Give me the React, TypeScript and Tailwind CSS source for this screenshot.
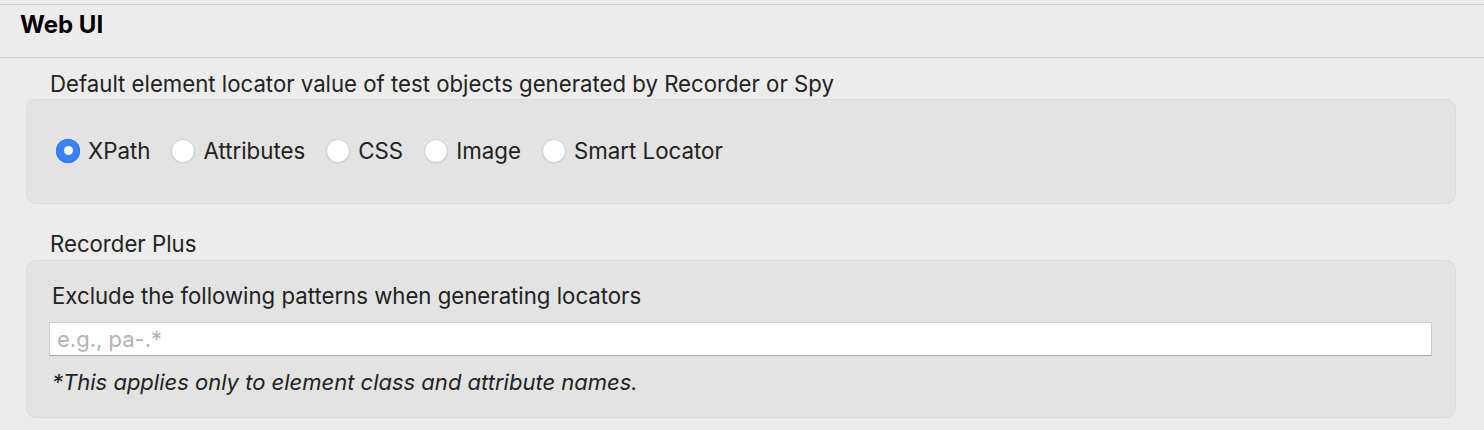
import React from 'react'

const font = { fontFamily: 'Inter, "Liberation Sans", sans-serif' }

const options = ['XPath', 'Attributes', 'CSS', 'Image', 'Smart Locator']

function Radio({ label, checked }: { label: string; checked?: boolean }) {
  return (
    <label className="flex items-center gap-[8px]">
      {checked ? (
        <span className="w-[24px] h-[24px] rounded-full bg-[#3a82f7] flex items-center justify-center shadow-[inset_0_0_0_1px_#2f74e6]">
          <span className="w-[9px] h-[9px] rounded-full bg-white" />
        </span>
      ) : (
        <span className="w-[24px] h-[24px] rounded-full bg-white border border-[#cfcfcf] shadow-[0_0.5px_1px_rgba(0,0,0,0.12)]" />
      )}
      <span className="text-[22.3px] text-[#222]">{label}</span>
    </label>
  )
}

export default function App() {
  return (
    <div className="w-[1484px] h-[430px] bg-[#ececec] overflow-hidden text-[#222]" style={font}>
      <div className="h-[4px]" />
      {/* header */}
      <div className="h-[54px] border-t border-b border-[#d2d2d2] flex items-center pl-[20px] pb-[12px]">
        <h1 className="text-[24px] font-bold text-black">Web UI</h1>
      </div>

      <div className="pl-[26px] pr-[28px]">
        <p className="pl-[24px] h-[40px] flex items-end pb-[3px] text-[22.2px] leading-none">
          Default element locator value of test objects generated by Recorder or Spy
        </p>
        <div className="mt-[1px] h-[105px] rounded-[10px] bg-[#e3e3e3] border border-[#dadada] flex items-center gap-[21px] pl-[29px] pb-[2px]">
          {options.map((o, i) => (
            <Radio key={o} label={o} checked={i === 0} />
          ))}
        </div>

        <p className="pl-[24px] h-[56px] flex items-end pb-[5px] text-[22.2px] leading-none">Recorder Plus</p>
        <div className="h-[158px] rounded-[10px] bg-[#e3e3e3] border border-[#dadada] pl-[22px] pr-[23px]">
          <p className="pt-[21px] pl-[3px] text-[22.2px] leading-[28px]">
            Exclude the following patterns when generating locators
          </p>
          <input
            readOnly
            placeholder="e.g., pa-.*"
            className="mt-[12px] w-full h-[34px] bg-white border border-[#cdcdcd] border-b-[#a9a9a9] px-[7px] text-[22px] placeholder:text-[#b3b3b3] outline-none"
            style={font}
          />
          <p className="pt-[12px] pl-[3px] text-[22px] leading-[28px] italic">
            *This applies only to element class and attribute names.
          </p>
        </div>
      </div>
    </div>
  )
}
